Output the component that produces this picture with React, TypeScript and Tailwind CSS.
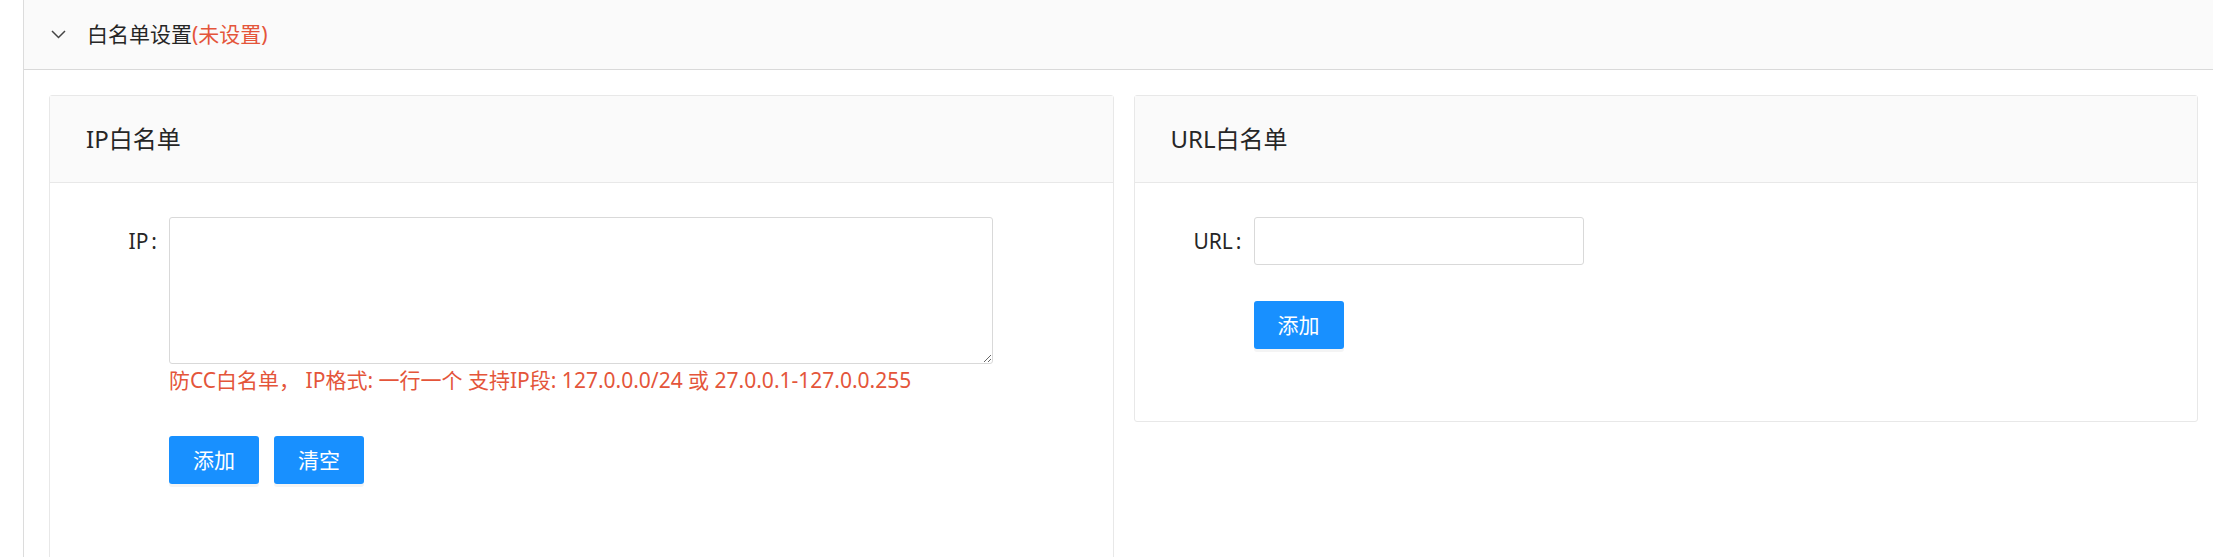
import React from "react";

function Button({ children }: { children: React.ReactNode }) {
  return (
    <button
      type="button"
      className="h-[48px] w-[90px] rounded-[3px] bg-[#1890ff] text-[21px] leading-[48px] text-white shadow-[0_3px_0_rgba(0,0,0,0.045)]"
    >
      {children}
    </button>
  );
}

function Label({ text }: { text: string }) {
  return (
    <div className="h-[48px] w-[119px] shrink-0 pr-[12px] text-right text-[21px] leading-[48px] text-[#262626]">
      {text}
      <span className="ml-[3px]">:</span>
    </div>
  );
}

function Card({ title, children }: { title: string; children: React.ReactNode }) {
  return (
    <div className="rounded-[3px] border border-[#e8e8e8] bg-white">
      <div className="flex h-[87px] items-center border-b border-[#e8e8e8] bg-[#fafafa] pl-[36px] text-[24px] text-[#262626]">
        {title}
      </div>
      {children}
    </div>
  );
}

export default function App() {
  return (
    <div className="min-h-[557px] bg-white pl-[23px] font-['Noto_Sans','Noto_Sans_CJK_SC',sans-serif]">
      <div className="min-h-[600px] border-l border-[#dcdcdc]">
        <div className="flex h-[70px] items-center border-b border-[#d9d9d9] bg-[#fafafa] pl-[27px] text-[21px] text-[#262626]">
          <svg width="15" height="9" viewBox="0 0 15 9" className="mr-[21px]">
            <polyline points="1,1 7.5,7.5 14,1" fill="none" stroke="#444" strokeWidth="1.5" />
          </svg>
          <span>白名单设置</span>
          <span className="text-[#e4553a]">(未设置)</span>
        </div>
        <div className="grid grid-cols-2 items-start gap-[20px] pl-[25px] pr-[15px] pt-[25px]">
          <Card title="IP白名单">
            <div className="pb-[90px] pt-[34px]">
              <div className="flex">
                <Label text="IP" />
                <div>
                  <textarea className="block h-[147px] w-[824px] rounded-[3px] border border-[#d9d9d9] bg-white outline-none" />
                  <div className="text-[21px] leading-[32px] text-[#e4553a]">
                    防CC白名单， IP格式: 一行一个 支持IP段: 127.0.0.0/24 或 27.0.0.1-127.0.0.255
                  </div>
                  <div className="mt-[40px] flex gap-[15px]">
                    <Button>添加</Button>
                    <Button>清空</Button>
                  </div>
                </div>
              </div>
            </div>
          </Card>
          <Card title="URL白名单">
            <div className="pb-[72px] pt-[34px]">
              <div className="flex">
                <Label text="URL" />
                <input className="h-[48px] w-[330px] rounded-[3px] border border-[#d9d9d9] bg-white outline-none" />
              </div>
              <div className="mt-[36px] pl-[119px]">
                <Button>添加</Button>
              </div>
            </div>
          </Card>
        </div>
      </div>
    </div>
  );
}
